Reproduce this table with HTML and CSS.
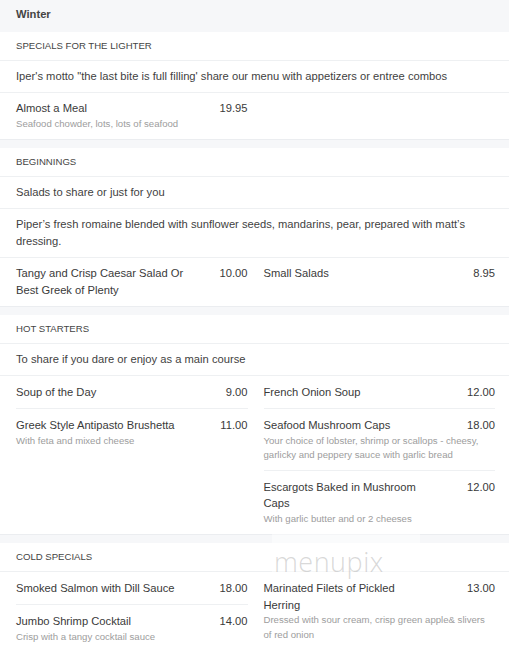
FILE: index.html
```html
<!DOCTYPE html>
<html>
<head>
<meta charset="utf-8">
<link rel="stylesheet" href="styles.css">
</head>
<body>
<div class="menu">
  <div class="menu-head">Winter</div>

  <section class="sec">
    <div class="sec-title">SPECIALS FOR THE LIGHTER</div>
    <div class="sec-desc">Iper's motto "the last bite is full filling' share our menu with appetizers or entree combos</div>
    <div class="items">
      <div class="col">
        <div class="item">
          <div class="item-head"><span class="name">Almost a Meal</span><span class="price">19.95</span></div>
          <div class="desc">Seafood chowder, lots, lots of seafood</div>
        </div>
      </div>
      <div class="col"></div>
    </div>
  </section>

  <section class="sec">
    <div class="sec-title">BEGINNINGS</div>
    <div class="sec-desc">Salads to share or just for you</div>
    <div class="sec-desc">Piper’s fresh romaine blended with sunflower seeds, mandarins, pear, prepared with matt’s dressing.</div>
    <div class="items">
      <div class="col">
        <div class="item">
          <div class="item-head"><span class="name">Tangy and Crisp Caesar Salad Or Best Greek of Plenty</span><span class="price">10.00</span></div>
        </div>
      </div>
      <div class="col">
        <div class="item">
          <div class="item-head"><span class="name">Small Salads</span><span class="price">8.95</span></div>
        </div>
      </div>
    </div>
  </section>

  <section class="sec">
    <div class="sec-title">HOT STARTERS</div>
    <div class="sec-desc">To share if you dare or enjoy as a main course</div>
    <div class="items">
      <div class="col">
        <div class="item">
          <div class="item-head"><span class="name">Soup of the Day</span><span class="price">9.00</span></div>
        </div>
        <div class="item">
          <div class="item-head"><span class="name">Greek Style Antipasto Brushetta</span><span class="price">11.00</span></div>
          <div class="desc">With feta and mixed cheese</div>
        </div>
      </div>
      <div class="col">
        <div class="item">
          <div class="item-head"><span class="name">French Onion Soup</span><span class="price">12.00</span></div>
        </div>
        <div class="item">
          <div class="item-head"><span class="name">Seafood Mushroom Caps</span><span class="price">18.00</span></div>
          <div class="desc">Your choice of lobster, shrimp or scallops - cheesy, garlicky and peppery sauce with garlic bread</div>
        </div>
        <div class="item">
          <div class="item-head"><span class="name">Escargots Baked in Mushroom Caps</span><span class="price">12.00</span></div>
          <div class="desc">With garlic butter and or 2 cheeses</div>
        </div>
      </div>
    </div>
  </section>

  <section class="sec">
    <div class="sec-title">COLD SPECIALS</div>
    <div class="items">
      <div class="col">
        <div class="item">
          <div class="item-head"><span class="name">Smoked Salmon with Dill Sauce</span><span class="price">18.00</span></div>
        </div>
        <div class="item">
          <div class="item-head"><span class="name">Jumbo Shrimp Cocktail</span><span class="price">14.00</span></div>
          <div class="desc">Crisp with a tangy cocktail sauce</div>
        </div>
      </div>
      <div class="col">
        <div class="item">
          <div class="item-head"><span class="name">Marinated Filets of Pickled Herring</span><span class="price">13.00</span></div>
          <div class="desc">Dressed with sour cream, crisp green apple&amp; slivers of red onion</div>
        </div>
      </div>
    </div>
  </section>

  <div class="watermark">menupix</div>
</div>
</body>
</html>
```
FILE: styles.css
```css
html, body {
  margin: 0;
  padding: 0;
}
body {
  font-family: "Liberation Sans", Arial, sans-serif;
  color: #3a3a3a;
  background: #fff;
}
.menu {
  position: relative;
  background: #f6f7f9;
}
.menu-head {
  height: 32px;
  line-height: 29px;
  padding: 0 16px;
  font-size: 11.2px;
  font-weight: bold;
  color: #444;
  background: #f6f7f9;
}
.sec {
  background: #fff;
  border-bottom: 1px solid #ebedf0;
  margin-bottom: 8px;
}
.sec-title {
  padding: 7px 16px;
  line-height: 14px;
  font-size: 9.6px;
  color: #444;
  border-bottom: 1px solid #eef0f2;
}
.sec-desc {
  padding: 7px 16px;
  line-height: 16.8px;
  font-size: 11.2px;
  color: #3f3f3f;
  border-bottom: 1px solid #eef0f2;
}
.items {
  display: grid;
  grid-template-columns: 1fr 1fr;
  column-gap: 16px;
  padding: 0 14px 0 16px;
}
.item {
  padding: 7.6px 0;
}
.item + .item {
  border-top: 1px solid #eef0f2;
}
.item-head {
  display: flex;
  justify-content: space-between;
  align-items: flex-start;
  font-size: 11.2px;
  line-height: 16.8px;
  color: #3a3a3a;
}
.name {
  max-width: 170px;
}
.price {
  text-align: right;
  white-space: nowrap;
}
.desc {
  font-size: 9.6px;
  line-height: 14.4px;
  color: #9d9d9d;
}
.watermark {
  position: absolute;
  left: 272px;
  top: 527px;
  width: 148px;
  height: 52px;
  box-sizing: border-box;
  padding: 23px 0 0 2px;
  background: rgba(255, 255, 255, 0.45);
  font-family: "Open Sans", sans-serif;
  font-weight: 300;
  font-size: 27px;
  line-height: 24px;
  letter-spacing: 0.5px;
  color: rgba(170, 170, 170, 0.45);
  pointer-events: none;
}
```
